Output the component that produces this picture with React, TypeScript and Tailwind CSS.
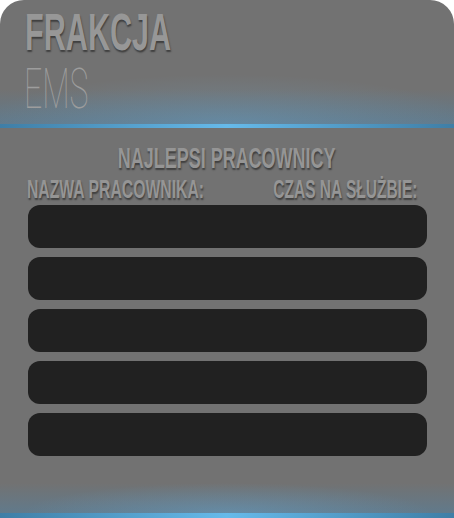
import React from 'react';

const rows = [0, 1, 2, 3, 4];

const bebas = "font-['Liberation_Sans',Arial,sans-serif] font-bold uppercase [text-shadow:1px_2px_2px_rgba(0,0,0,0.45)]";

export default function App() {
  return (
    <div className="min-h-screen bg-white">
      <div className="w-[454px] h-[518px] bg-[#727272] rounded-t-[24px] overflow-hidden flex flex-col">
        {/* header */}
        <div className="h-[124px] pl-[25px] pt-[7px] flex flex-col [background:radial-gradient(ellipse_55%_40%_at_50%_100%,rgba(110,185,235,0.25),transparent),linear-gradient(to_bottom,transparent_72%,rgba(70,135,180,0.38))]">
          <div className={`${bebas} text-[51px] leading-none h-[51px] text-[#979797] whitespace-nowrap`}>
            <span className="inline-block origin-left scale-x-[0.6]">Frakcja</span>
          </div>
          <div className="mt-[3px] text-[56px] leading-none h-[56px] font-thin text-[#9d9d9d] font-['Roboto','Lato',sans-serif] whitespace-nowrap">
            <span className="inline-block origin-left scale-x-[0.57] -ml-[1px]">EMS</span>
          </div>
        </div>
        <div className="h-[4px] bg-[linear-gradient(to_right,#3f7ea6,#66baea_50%,#3f7ea6)]" />

        {/* body */}
        <div className="flex-1 flex flex-col pt-[16px]">
          <div className={`${bebas} text-[29px] leading-none h-[29px] text-[#959595] text-center whitespace-nowrap`}>
            <span className="inline-block origin-center scale-x-[0.62]">Najlepsi pracownicy</span>
          </div>
          <div className={`${bebas} mt-[4px] text-[25px] leading-none h-[25px] text-[#959595] flex justify-between pl-[27px] pr-[37px] whitespace-nowrap`}>
            <span className="inline-block origin-left scale-x-[0.63] w-0">Nazwa pracownika:</span>
            <span className="inline-block origin-right scale-x-[0.62]">Czas na służbie:</span>
          </div>
          <div className="mt-[3px] pl-[28px] pr-[27px] flex flex-col gap-[9px]">
            {rows.map((r) => (
              <div key={r} className="h-[43px] rounded-[12px] bg-[#212121]" />
            ))}
          </div>
          <div className="flex-1" />
          <div className="h-[30px] [background:radial-gradient(ellipse_45%_100%_at_50%_100%,rgba(110,185,235,0.28),transparent),linear-gradient(to_bottom,transparent,rgba(70,135,180,0.38))]" />
        </div>
        <div className="h-[5px] bg-[linear-gradient(to_right,#3f7ea6,#66baea_50%,#3f7ea6)]" />
      </div>
    </div>
  );
}
